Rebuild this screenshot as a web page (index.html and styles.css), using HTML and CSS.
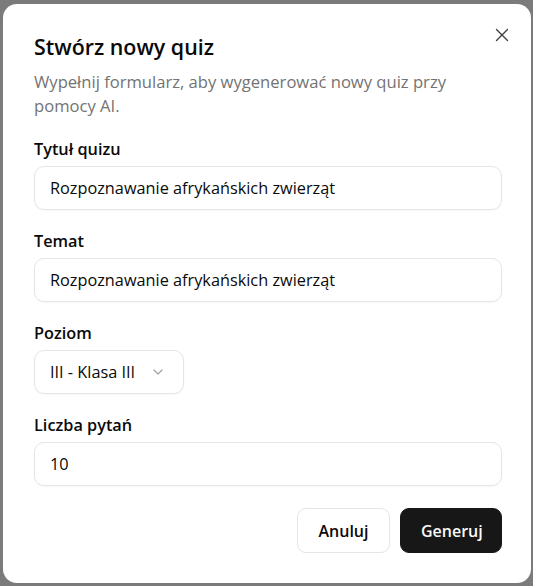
FILE: index.html
```html
<!DOCTYPE html>
<html lang="pl">
<head>
<meta charset="utf-8">
<link rel="stylesheet" href="styles.css">
</head>
<body>
<div class="overlay">
  <div class="dialog">
    <button class="close" aria-label="Zamknij">
      <svg width="16" height="16" viewBox="0 0 16 16" fill="none" stroke="currentColor" stroke-width="1.4" stroke-linecap="round"><path d="M2.5 2.5l11 11M13.5 2.5l-11 11"/></svg>
    </button>
    <h2 class="title">Stwórz nowy quiz</h2>
    <p class="desc">Wypełnij formularz, aby wygenerować nowy quiz przy pomocy AI.</p>
    <div class="field first">
      <label class="label">Tytuł quizu</label>
      <div class="input">Rozpoznawanie afrykańskich zwierząt</div>
    </div>
    <div class="field">
      <label class="label">Temat</label>
      <div class="input">Rozpoznawanie afrykańskich zwierząt</div>
    </div>
    <div class="field">
      <label class="label">Poziom</label>
      <div class="select">
        <span>III - Klasa III</span>
        <svg width="16" height="16" viewBox="0 0 16 16" fill="none" stroke="#a3a3a3" stroke-width="1.2" stroke-linecap="round" stroke-linejoin="round"><path d="M4 6l4 4 4-4"/></svg>
      </div>
    </div>
    <div class="field">
      <label class="label">Liczba pytań</label>
      <div class="input">10</div>
    </div>
    <div class="actions">
      <button class="btn outline">Anuluj</button>
      <button class="btn primary">Generuj</button>
    </div>
  </div>
</div>
</body>
</html>
```
FILE: styles.css
```css
* { box-sizing: border-box; }
html, body { margin: 0; padding: 0; }
body {
  width: 533px;
  height: 586px;
  background: #7b7b7b;
  font-family: "Open Sans", "Noto Sans", sans-serif;
  color: #0a0a0a;
  overflow: hidden;
}
.overlay {
  padding: 4px 2px 3px 3px;
}
.dialog {
  position: relative;
  width: 528px;
  height: 579px;
  background: #fff;
  border-radius: 14px;
  padding: 28px 29px 30px 31px;
  display: flex;
  flex-direction: column;
}
.close {
  position: absolute;
  top: 23px;
  right: 21px;
  width: 16px;
  height: 16px;
  padding: 0;
  border: 0;
  background: none;
  color: #404040;
  display: flex;
}
.title {
  margin: 0;
  font-size: 21.4px;
  line-height: 30px;
  font-weight: 600;
}
.desc {
  margin: 8px 0 0;
  font-size: 16.6px;
  line-height: 24px;
  color: #737373;
  padding-right: 30px;
}
.field {
  display: flex;
  flex-direction: column;
  gap: 5px;
  margin-top: 19px;
}
.label {
  font-size: 16.3px;
  line-height: 24px;
  font-weight: 600;
}
.input, .select {
  height: 44px;
  border: 1px solid #e5e5e5;
  border-radius: 10px;
  padding: 0 15px;
  font-size: 16.3px;
  display: flex;
  align-items: center;
  box-shadow: 0 1px 2px rgba(0,0,0,0.04);
}
.select {
  width: 150px;
  justify-content: space-between;
  padding-right: 17px;
}
.actions {
  margin-top: 22px;
  display: flex;
  justify-content: flex-end;
  gap: 10px;
}
.btn {
  height: 45px;
  font-family: inherit;
  font-size: 16px;
  font-weight: 600;
  border-radius: 9px;
  padding: 0 20px;
}
.outline {
  background: #fff;
  border: 1px solid #e5e5e5;
  color: #0a0a0a;
  width: 93px;
}
.primary {
  background: #171717;
  border: 1px solid #171717;
  color: #fafafa;
  width: 102px;
}
```
